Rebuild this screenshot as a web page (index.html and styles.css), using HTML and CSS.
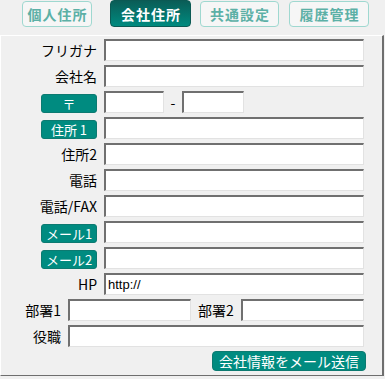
FILE: index.html
```html
<!DOCTYPE html>
<html lang="ja">
<head>
    <meta charset="UTF-8">
    <meta name="viewport" content="width=device-width, initial-scale=1.0">
    <title>会社住所</title>
    <link rel="stylesheet" href="styles.css">
</head>
<body>
    <div class="tabs">
        <button class="tab tab-private">個人住所</button>
        <button class="tab tab-company active">会社住所</button>
        <button class="tab tab-common">共通設定</button>
        <button class="tab tab-history">履歴管理</button>
    </div>

    <div class="panel">
        <div class="row">
            <label class="lbl">フリガナ</label>
            <input class="field" type="text">
        </div>
        <div class="row">
            <label class="lbl">会社名</label>
            <input class="field" type="text">
        </div>
        <div class="row">
            <div class="lbl"><button class="tag">〒</button></div>
            <input class="field zip1" type="text">
            <span class="dash">-</span>
            <input class="field zip2" type="text">
        </div>
        <div class="row">
            <div class="lbl"><button class="tag">住所 1</button></div>
            <input class="field" type="text">
        </div>
        <div class="row">
            <label class="lbl">住所2</label>
            <input class="field" type="text">
        </div>
        <div class="row">
            <label class="lbl">電話</label>
            <input class="field" type="text">
        </div>
        <div class="row">
            <label class="lbl">電話/FAX</label>
            <input class="field" type="text">
        </div>
        <div class="row">
            <div class="lbl"><button class="tag">メール1</button></div>
            <input class="field" type="text">
        </div>
        <div class="row">
            <div class="lbl"><button class="tag">メール2</button></div>
            <input class="field" type="text">
        </div>
        <div class="row">
            <label class="lbl">HP</label>
            <input class="field" type="text" value="http://">
        </div>
        <div class="row split">
            <label class="lbl short">部署1</label>
            <input class="field" type="text">
            <label class="lbl mid">部署2</label>
            <input class="field" type="text">
        </div>
        <div class="row split">
            <label class="lbl short">役職</label>
            <input class="field" type="text">
        </div>
        <div class="actions">
            <button class="send-btn">会社情報をメール送信</button>
        </div>
    </div>
</body>
</html>
```

FILE: styles.css
```css
body {
    margin: 0;
    background: #f0f0f0;
    font-family: 'Noto Sans CJK JP', sans-serif;
    font-size: 14px;
    color: #000;
    width: 385px;
    height: 379px;
    overflow: hidden;
}
.tabs {
    display: flex;
    padding: 1px 0 0 22px;
    height: 26px;
}
.tab {
    box-sizing: border-box;
    height: 26px;
    border: 1px solid #9fd8d0;
    border-radius: 4px;
    background: #f6f6f6;
    color: #5cb0a6;
    font-family: 'Noto Sans CJK JP', sans-serif;
    font-size: 14px;
    font-weight: 700;
    letter-spacing: 1px;
    padding: 0 0 0 1px;
    margin-right: 9px;
}
.tab-private {
    width: 70px;
    margin-right: 18px;
}
.tab-company {
    width: 81px;
    margin-top: -1px;
    height: 27px;
}
.tab-common {
    width: 79px;
    margin-right: 10px;
}
.tab-history {
    width: 80px;
}
.tab.active {
    background: linear-gradient(180deg, #0a5d57, #008a7f);
    border-color: #0b5a54;
    color: #ffffff;
}
.panel {
    box-sizing: border-box;
    width: 384px;
    margin-top: 8px;
    border-top: 1px solid #ffffff;
    border-left: 1px solid #ffffff;
    border-right: 2px solid #6e6e6e;
    border-bottom: 1px solid #6e6e6e;
    padding: 3px 18px 4px 0;
}
.row {
    display: flex;
    align-items: center;
    height: 22px;
    margin-bottom: 4px;
}
.lbl {
    box-sizing: border-box;
    width: 97px;
    flex-shrink: 0;
    text-align: right;
    padding-right: 1px;
    margin-right: 6px;
    line-height: 22px;
    white-space: nowrap;
}
.lbl.short {
    width: 61px;
}
.lbl.mid {
    width: auto;
    margin-left: 7px;
}
.field {
    box-sizing: border-box;
    flex: 1;
    min-width: 0;
    height: 22px;
    margin: 0;
    padding: 0 2px;
    background: #ffffff;
    border-top: 2px solid #707070;
    border-left: 2px solid #707070;
    border-right: 1px solid #e2e2e2;
    border-bottom: 1px solid #e2e2e2;
    font-family: 'Liberation Sans', 'Noto Sans CJK JP', sans-serif;
    font-size: 13px;
    color: #000;
    outline: none;
}
.field.zip1 {
    flex: none;
    width: 60px;
}
.field.zip2 {
    flex: none;
    width: 62px;
}
.dash {
    width: 18px;
    text-align: center;
}
.tag {
    box-sizing: border-box;
    width: 56px;
    height: 19px;
    padding: 0;
    border: 1px solid #0c7a71;
    border-radius: 3px;
    background: #008b80;
    color: #ffffff;
    font-family: 'Noto Sans CJK JP', sans-serif;
    font-size: 13px;
    line-height: 17px;
    vertical-align: middle;
}
.actions {
    display: flex;
    justify-content: flex-end;
    margin: 2px -2px 0 0;
}
.send-btn {
    box-sizing: border-box;
    width: 154px;
    height: 20px;
    padding: 0;
    border: 1px solid #0c7a71;
    border-radius: 4px;
    background: #008b80;
    color: #ffffff;
    font-family: 'Noto Sans CJK JP', sans-serif;
    font-size: 14px;
    line-height: 18px;
}
```
